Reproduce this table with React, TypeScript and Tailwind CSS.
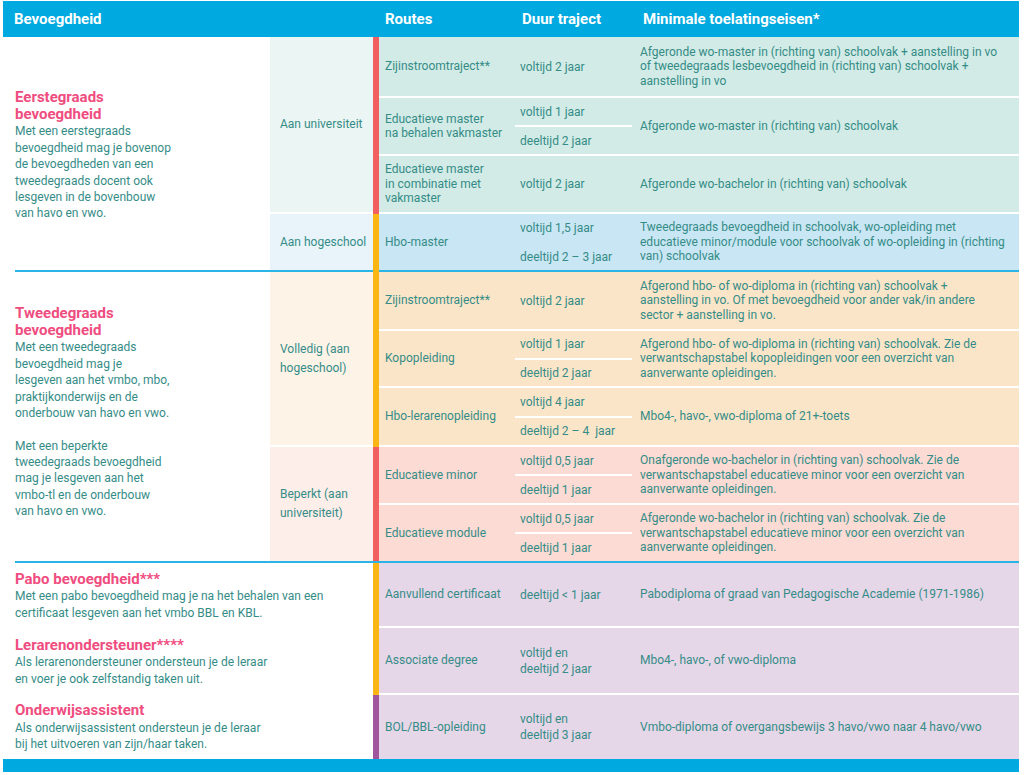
import React from 'react';

type Duur =
  | { kind: 'single'; lines: string[] }
  | { kind: 'split'; top: string; bottom: string; line: boolean };

type Route = {
  h: string;
  route: string[];
  duur: Duur;
  eisen: string[];
};

type Group = {
  label: string[];
  labelBg: string;
  bar: string;
  rowBg: string;
  rows: Route[];
};

const teal = 'text-[#358c87]';

const one = (s: string): Duur => ({ kind: 'single', lines: [s] });
const split = (top: string, bottom: string, line = true): Duur => ({ kind: 'split', top, bottom, line });

// Eerstegraads
const firstGroups: Group[] = [
  {
    label: ['Aan universiteit'],
    labelBg: 'bg-[#ebf5f3]',
    bar: 'bg-[#f15f61]',
    rowBg: 'bg-[#d2ebe6]',
    rows: [
      {
        h: 'h-[59px]',
        route: ['Zijinstroomtraject**'],
        duur: one('voltijd 2 jaar'),
        eisen: [
          'Afgeronde wo-master in (richting van) schoolvak + aanstelling in vo',
          'of tweedegraads lesbevoegdheid in (richting van) schoolvak +',
          'aanstelling in vo',
        ],
      },
      {
        h: 'h-[56px]',
        route: ['Educatieve master', 'na behalen vakmaster'],
        duur: split('voltijd 1 jaar', 'deeltijd 2 jaar'),
        eisen: ['Afgeronde wo-master in (richting van) schoolvak'],
      },
      {
        h: 'h-[56px]',
        route: ['Educatieve master', 'in combinatie met', 'vakmaster'],
        duur: one('voltijd 2 jaar'),
        eisen: ['Afgeronde wo-bachelor in (richting van) schoolvak'],
      },
    ],
  },
  {
    label: ['Aan hogeschool'],
    labelBg: 'bg-[#e8f4fa]',
    bar: 'bg-[#fbb514]',
    rowBg: 'bg-[#c9e6f4]',
    rows: [
      {
        h: 'h-[56px]',
        route: ['Hbo-master'],
        duur: split('voltijd 1,5 jaar', 'deeltijd 2 – 3 jaar', false),
        eisen: [
          'Tweedegraads bevoegdheid in schoolvak, wo-opleiding met',
          'educatieve minor/module voor schoolvak of wo-opleiding in (richting',
          'van) schoolvak',
        ],
      },
    ],
  },
];

// Tweedegraads
const secondGroups: Group[] = [
  {
    label: ['Volledig (aan', 'hogeschool)'],
    labelBg: 'bg-[#fdf3e7]',
    bar: 'bg-[#fbb514]',
    rowBg: 'bg-[#fbe5c9]',
    rows: [
      {
        h: 'h-[57px]',
        route: ['Zijinstroomtraject**'],
        duur: one('voltijd 2 jaar'),
        eisen: [
          'Afgerond hbo- of wo-diploma in (richting van) schoolvak +',
          'aanstelling in vo. Of met bevoegdheid voor ander vak/in andere',
          'sector + aanstelling in vo.',
        ],
      },
      {
        h: 'h-[55px]',
        route: ['Kopopleiding'],
        duur: split('voltijd 1 jaar', 'deeltijd 2 jaar'),
        eisen: [
          'Afgerond hbo- of wo-diploma in (richting van) schoolvak. Zie de',
          'verwantschapstabel kopopleidingen voor een overzicht van',
          'aanverwante opleidingen.',
        ],
      },
      {
        h: 'h-[57px]',
        route: ['Hbo-lerarenopleiding'],
        duur: split('voltijd 4 jaar', 'deeltijd 2 – 4  jaar'),
        eisen: ['Mbo4-, havo-, vwo-diploma of 21+-toets'],
      },
    ],
  },
  {
    label: ['Beperkt (aan', 'universiteit)'],
    labelBg: 'bg-[#fdeee9]',
    bar: 'bg-[#f15f61]',
    rowBg: 'bg-[#fbdbd3]',
    rows: [
      {
        h: 'h-[56px]',
        route: ['Educatieve minor'],
        duur: split('voltijd 0,5 jaar', 'deeltijd 1 jaar'),
        eisen: [
          'Onafgeronde wo-bachelor in (richting van) schoolvak. Zie de',
          'verwantschapstabel educatieve minor voor een overzicht van',
          'aanverwante opleidingen.',
        ],
      },
      {
        h: 'h-[56px]',
        route: ['Educatieve module'],
        duur: split('voltijd 0,5 jaar', 'deeltijd 1 jaar'),
        eisen: [
          'Afgeronde wo-bachelor in (richting van) schoolvak. Zie de',
          'verwantschapstabel educatieve minor voor een overzicht van',
          'aanverwante opleidingen.',
        ],
      },
    ],
  },
];

// Pabo, lerarenondersteuner, onderwijsassistent
const thirdRows: { title: string; body: string[]; bar: string; row: Route }[] = [
  {
    title: 'Pabo bevoegdheid***',
    body: ['Met een pabo bevoegdheid mag je na het behalen van een', 'certificaat lesgeven aan het vmbo BBL en KBL.'],
    bar: 'bg-[#fbb514]',
    row: {
      h: 'h-[63px]',
      route: ['Aanvullend certificaat'],
      duur: one('deeltijd < 1 jaar'),
      eisen: ['Pabodiploma of graad van Pedagogische Academie (1971-1986)'],
    },
  },
  {
    title: 'Lerarenondersteuner****',
    body: ['Als lerarenondersteuner ondersteun je de leraar', 'en voer je ook zelfstandig taken uit.'],
    bar: 'bg-[#fbb514]',
    row: {
      h: 'h-[65px]',
      route: ['Associate degree'],
      duur: { kind: 'single', lines: ['voltijd en', 'deeltijd 2 jaar'] },
      eisen: ['Mbo4-, havo-, of vwo-diploma'],
    },
  },
  {
    title: 'Onderwijsassistent',
    body: ['Als onderwijsassistent ondersteun je de leraar', 'bij het uitvoeren van zijn/haar taken.'],
    bar: 'bg-[#a0569c]',
    row: {
      h: 'h-[64px]',
      route: ['BOL/BBL-opleiding'],
      duur: { kind: 'single', lines: ['voltijd en', 'deeltijd 3 jaar'] },
      eisen: ['Vmbo-diploma of overgangsbewijs 3 havo/vwo naar 4 havo/vwo'],
    },
  },
];

function Lines({ lines }: { lines: string[] }) {
  return (
    <div>
      {lines.map((l, i) => (
        <div key={i} className="whitespace-pre">
          {l}
        </div>
      ))}
    </div>
  );
}

function DuurCell({ duur }: { duur: Duur }) {
  if (duur.kind === 'single') {
    return (
      <div className="w-[123px] flex items-center pl-[8px] leading-[16px]">
        <Lines lines={duur.lines} />
      </div>
    );
  }
  return (
    <div className="w-[123px] flex flex-col">
      <div className="flex-1 flex items-center pl-[8px]">{duur.top}</div>
      <div className={`h-[2px] mx-[3px] ${duur.line ? 'bg-white' : ''}`} />
      <div className="flex-1 flex items-center pl-[8px] whitespace-pre">{duur.bottom}</div>
    </div>
  );
}

function RouteRow({ row, bg, last = true }: { row: Route; bg: string; last?: boolean }) {
  return (
    <div className={`flex ${row.h} ${bg} ${last ? '' : 'border-b-2 border-white'} box-content`}>
      <div className="w-[133px] flex items-center pl-[6px] leading-[14.5px]">
        <Lines lines={row.route} />
      </div>
      <DuurCell duur={row.duur} />
      <div className="flex-1 flex items-center pl-[5px] leading-[14.5px]">
        <Lines lines={row.eisen} />
      </div>
    </div>
  );
}

function GroupBlock({ group, last }: { group: Group; last: boolean }) {
  return (
    <div className="flex">
      <div
        className={`w-[103px] flex items-center pl-[10px] leading-[19px] ${group.labelBg} ${
          last ? '' : 'border-b-2 border-white'
        }`}
      >
        <Lines lines={group.label} />
      </div>
      <div className={`w-[6px] ${group.bar}`} />
      <div className={`flex-1 flex flex-col ${last ? '' : 'border-b-2 border-white'}`}>
        {group.rows.map((r, i) => (
          <RouteRow key={i} row={r} bg={group.rowBg} last={i === group.rows.length - 1} />
        ))}
      </div>
    </div>
  );
}

function Title({ lines }: { lines: string[] }) {
  return (
    <div className="text-[#ef4d80] font-bold text-[15px] leading-[16.5px] mb-[1px]">
      <Lines lines={lines} />
    </div>
  );
}

function Body({ lines }: { lines: string[] }) {
  return (
    <div className="text-[12px] leading-[16.4px]">
      {lines.map((l, i) => (
        <div key={i} className="whitespace-pre h-[16.4px]">
          {l}
        </div>
      ))}
    </div>
  );
}

function Divider({ barColor }: { barColor?: string }) {
  return (
    <div className="flex h-[2px]">
      <div className="w-[12px] bg-white" />
      <div className="w-[358px] bg-[#2bb5e6]" />
      <div className={`w-[6px] ${barColor ?? 'bg-[#2bb5e6]'}`} />
      <div className="flex-1 bg-[#2bb5e6]" />
    </div>
  );
}

export default function App() {
  return (
    <div className={`w-[1024px] h-[775px] bg-white pt-[1px] pl-[3px] pr-[5px] font-[Roboto,sans-serif] text-[12px] ${teal}`}>
      {/* header */}
      <div className="flex h-[36px] items-center bg-[#00a9df] text-white font-bold text-[15px]">
        <div className="w-[370px] pl-[11px]">Bevoegdheid</div>
        <div className="w-[6px]" />
        <div className="w-[133px] pl-[6px]">Routes</div>
        <div className="w-[123px] pl-[10px]">Duur traject</div>
        <div className="flex-1 pl-[8px]">Minimale toelatingseisen*</div>
      </div>

      {/* eerstegraads */}
      <div className="flex">
        <div className="w-[267px] flex items-center pl-[12px] pt-[4px]">
          <div>
            <Title lines={['Eerstegraads', 'bevoegdheid']} />
            <Body
              lines={[
                'Met een eerstegraads',
                'bevoegdheid mag je bovenop',
                'de bevoegdheden van een',
                'tweedegraads docent ook',
                'lesgeven in de bovenbouw',
                'van havo en vwo.',
              ]}
            />
          </div>
        </div>
        <div className="flex-1 flex flex-col">
          {firstGroups.map((g, i) => (
            <GroupBlock key={i} group={g} last={i === firstGroups.length - 1} />
          ))}
        </div>
      </div>

      <Divider barColor="bg-[#fbb514]" />

      {/* tweedegraads */}
      <div className="flex">
        <div className="w-[267px] flex items-center pl-[12px] pb-[8px]">
          <div>
            <Title lines={['Tweedegraads', 'bevoegdheid']} />
            <Body
              lines={[
                'Met een tweedegraads',
                'bevoegdheid mag je',
                'lesgeven aan het vmbo, mbo,',
                'praktijkonderwijs en de',
                'onderbouw van havo en vwo.',
                '',
                'Met een beperkte',
                'tweedegraads bevoegdheid',
                'mag je lesgeven aan het',
                'vmbo-tl en de onderbouw',
                'van havo en vwo.',
              ]}
            />
          </div>
        </div>
        <div className="flex-1 flex flex-col">
          {secondGroups.map((g, i) => (
            <GroupBlock key={i} group={g} last={i === secondGroups.length - 1} />
          ))}
        </div>
      </div>

      <Divider />

      {/* pabo / ondersteuners */}
      <div className="flex flex-col">
        {thirdRows.map((t, i) => (
          <div key={i} className="flex">
            <div className="w-[370px] flex items-center pl-[12px] pt-[1px]">
              <div>
                <Title lines={[t.title]} />
                <Body lines={t.body} />
              </div>
            </div>
            <div className={`w-[6px] ${t.bar}`} />
            <div className="flex-1">
              <RouteRow row={t.row} bg="bg-[#e5d7e8]" last={i === thirdRows.length - 1} />
            </div>
          </div>
        ))}
      </div>

      <div className="h-[13px] bg-[#00a9df]" />
    </div>
  );
}
